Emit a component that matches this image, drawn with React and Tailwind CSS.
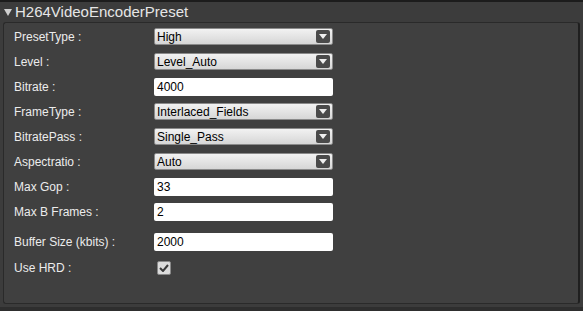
import React from "react";

const rows = [
  { label: "PresetType :", type: "select", value: "High" },
  { label: "Level :", type: "select", value: "Level_Auto" },
  { label: "Bitrate :", type: "input", value: "4000" },
  { label: "FrameType :", type: "select", value: "Interlaced_Fields" },
  { label: "BitratePass :", type: "select", value: "Single_Pass" },
  { label: "Aspectratio :", type: "select", value: "Auto" },
  { label: "Max Gop :", type: "input", value: "33" },
  { label: "Max B Frames :", type: "input", value: "2" },
];

function FakeSelect({ value }) {
  return (
    <div className="relative flex h-[17px] w-[179px] items-center rounded-[2px] border border-[#8a8a8a] bg-gradient-to-b from-[#f2f2f2] to-[#d6d6d6] pl-[2px] text-[12px] text-black">
      {value}
      <span className="absolute right-[2px] top-[1px] flex h-[13px] w-[14px] items-center justify-center rounded-[2px] bg-[#4a4a4a]">
        <svg width="8" height="5" viewBox="0 0 8 5">
          <path d="M0 0H8L4 5Z" fill="#f0f0f0" />
        </svg>
      </span>
    </div>
  );
}

function FakeInput({ value }) {
  return (
    <div className="flex h-[18px] w-[179px] items-center rounded-[2px] bg-white pl-[3px] text-[12px] text-black">
      {value}
    </div>
  );
}

function Row({ label, children, className = "" }) {
  return (
    <div className={`flex h-[25px] items-center ${className}`}>
      <div className="w-[140px] text-[12px] text-[#ececec]">{label}</div>
      {children}
    </div>
  );
}

export default function App() {
  return (
    <div className="h-[311px] w-[583px] overflow-hidden bg-[#2e2e2e] font-['Liberation_Sans',Arial,sans-serif]">
      <div className="h-[307px] border-t-2 border-[#1c1c1c] bg-[#3c3c3c]">
        <div className="flex h-[20px] items-center pl-[4px] text-[15px] text-[#e6e6e6]">
          <svg width="8" height="7" viewBox="0 0 8 7" className="mr-[3px] mt-[1px]">
            <path d="M0 0H8L4 7Z" fill="#cfcfcf" />
          </svg>
          H264VideoEncoderPreset
        </div>
        <div className="ml-[3px] h-[282px] w-[577px] rounded-[3px] border border-l-[#2a2a2a] border-t-[#2a2a2a] border-r-2 border-r-[#1f1f1f] border-b-[#2a2a2a] bg-[#404040] pl-[10px] pt-[1px]">
          {rows.map((r) => (
            <Row key={r.label} label={r.label}>
              {r.type === "select" ? <FakeSelect value={r.value} /> : <FakeInput value={r.value} />}
            </Row>
          ))}
          <Row label="Buffer Size (kbits) :" className="mt-[5px]">
            <FakeInput value="2000" />
          </Row>
          <Row label="Use HRD :" className="mt-[1px]">
            <div className="ml-[3px] flex h-[14px] w-[14px] items-center justify-center rounded-[2px] border border-[#8a8a8a] bg-[#dcdcdc]">
              <svg width="10" height="8" viewBox="0 0 10 8">
                <path d="M1 4L4 7L9 1" stroke="#3a3a3a" strokeWidth="2" fill="none" />
              </svg>
            </div>
          </Row>
        </div>
      </div>
    </div>
  );
}
